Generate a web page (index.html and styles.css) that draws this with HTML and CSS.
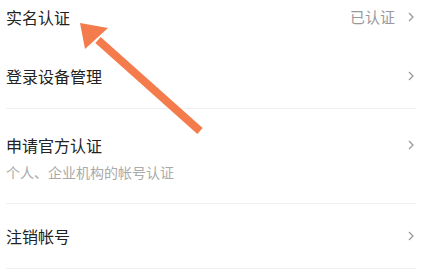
FILE: index.html
```html
<!DOCTYPE html>
<html lang="zh-CN">
<head>
  <meta charset="UTF-8" />
  <title>帐号与安全</title>
  <link rel="stylesheet" href="styles.css">
</head>
<body>
  <div class="menu">
    <div class="row first">
      <span class="title">实名认证</span>
      <span class="meta">已认证</span>
      <svg class="chev" viewBox="0 0 6 10"><polyline points="1,1 5,5 1,9" /></svg>
    </div>
    <div class="row line">
      <span class="title">登录设备管理</span>
      <svg class="chev" viewBox="0 0 6 10"><polyline points="1,1 5,5 1,9" /></svg>
    </div>
    <div class="row line tall">
      <div class="head">
        <span class="title">申请官方认证</span>
        <svg class="chev" viewBox="0 0 6 10"><polyline points="1,1 5,5 1,9" /></svg>
      </div>
      <div class="sub">个人、企业机构的帐号认证</div>
    </div>
    <div class="row line">
      <span class="title">注销帐号</span>
      <svg class="chev" viewBox="0 0 6 10"><polyline points="1,1 5,5 1,9" /></svg>
    </div>
  </div>

  <!-- annotation arrow drawn over the list -->
  <svg class="arrow" width="426" height="276" viewBox="0 0 426 276">
    <line x1="98" y1="40" x2="200" y2="131" />
    <polygon points="80,23 108,28 85,49" />
  </svg>
</body>
</html>
```

FILE: styles.css
```css
:root {
  --text: #222;
  --muted: #999;
  --light: #aaa;
  --line: #f0f0f0;
  --accent: #f47c4c;
}

body {
  margin: 0;
  background: #fff;
  font-family: "Noto Sans CJK SC", "Noto Sans", sans-serif;
  color: var(--text);
  overflow: hidden;
}

.menu {
  margin: 0 10px 0 6px;
}

.row {
  display: flex;
  align-items: center;
  padding: 24px 0;
  line-height: 16px;
  font-size: 16px;
}

.row.first {
  padding: 9px 0 19px;
}

.row.line {
  border-bottom: 1px solid var(--line);
}

.row.tall {
  display: block;
  padding: 28px 0 24px;
}

.head {
  display: flex;
  align-items: center;
}

.title {
  flex: 1;
}

.meta {
  font-size: 15px;
  color: var(--muted);
  margin-right: 13px;
}

.sub {
  margin-top: 12px;
  font-size: 14px;
  line-height: 14px;
  color: var(--light);
}

.chev {
  width: 6px;
  height: 10px;
  margin-right: 2px;
  fill: none;
  stroke: #999;
  stroke-width: 1.3;
}

.arrow {
  position: absolute;
  top: 0;
  left: 0;
}

.arrow line {
  stroke: var(--accent);
  stroke-width: 8;
}

.arrow polygon {
  fill: var(--accent);
}
```
